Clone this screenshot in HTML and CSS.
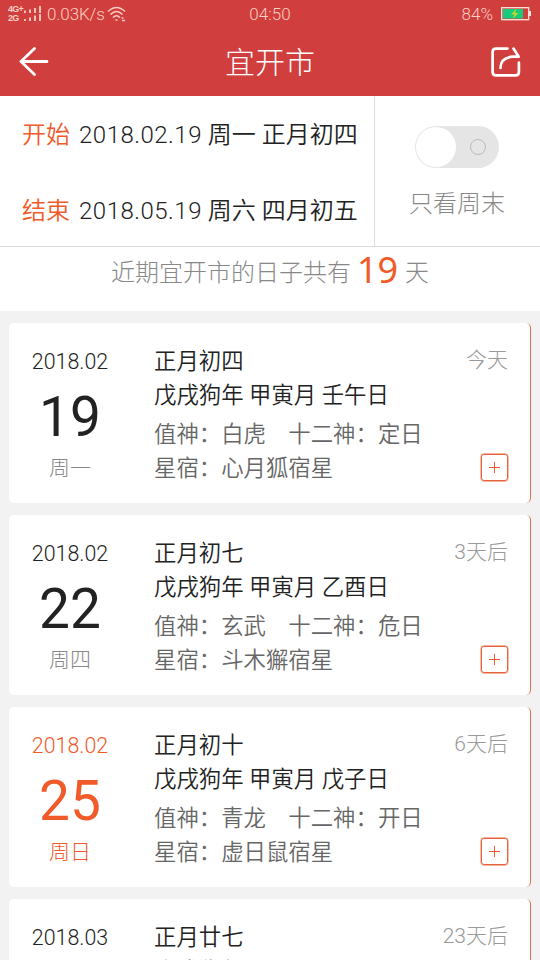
FILE: index.html
```html
<!DOCTYPE html>
<html lang="zh-CN">
<head>
<meta charset="utf-8">
<title>宜开市</title>
<link rel="stylesheet" href="styles.css">
</head>
<body>
<header class="top">
  <div class="status">
    <div class="status-left">
      <div class="nets"><span>4G+</span><span>2G</span></div>
      <svg class="signal" width="17" height="16" viewBox="0 0 17 16"><path d="M1 4.500v2.500M6 3.500v3.500M11 2v5M16 0v7M1 13v2M6 11.500v3.500M11 9.500v5.500M16 8v7" stroke="#fbcfc3" stroke-width="1.800"/></svg>
      <span class="speed">0.03K/s</span>
      <svg class="wifi" width="20" height="16" viewBox="0 0 20 16" fill="none" stroke="#fbcfc3" stroke-width="1.500"><path d="M1 5.500Q9.500-2.500 18 5.500M3.500 8.500Q9.500 2.500 15.500 8.500M6 11.500Q9.500 8 13 11.500"/><path d="M8.500 14h2M14.500 12h2M15 14.500h3"/></svg>
    </div>
    <span class="clock">04:50</span>
    <div class="status-right">
      <span>84%</span>
      <svg width="31" height="14" viewBox="0 0 31 14"><rect x=".7" y=".7" width="27" height="12" fill="none" stroke="#ffe4dc" stroke-width="1.300"/><rect x="2" y="2" width="20" height="9.500" fill="#16cc7c"/><path d="M28 4h2v5h-2z" fill="#ffe4dc"/><path d="M15.500 1.500L10 7.500h3.500L11.500 12l6-6h-3.500z" fill="#c6d62c"/></svg>
    </div>
  </div>
  <div class="nav">
    <svg width="30" height="30" viewBox="0 0 30 30" fill="none" stroke="#fff" stroke-width="2.800" stroke-linecap="round" stroke-linejoin="round"><path d="M15.500 1.500L2 14.500l13.500 13M2 14.500h26"/></svg>
    <h1>宜开市</h1>
    <svg width="30" height="30" viewBox="0 0 30 30" fill="none" stroke="#fff" stroke-width="2.700" stroke-linecap="round" stroke-linejoin="round"><path d="M16.500 1.600H5Q1.600 1.600 1.600 5v20q0 3.400 3.400 3.400h19.500q3.400 0 3.400-3.400v-9.500"/><path d="M22.500 1.600l5.200 8.100H22Q9.500 10.500 9.500 21"/></svg>
  </div>
</header>

<section class="filter">
  <div class="range">
    <div class="range-row"><span class="label">开始</span><span><span class="num">2018.02.19</span> 周一 正月初四</span></div>
    <div class="range-row"><span class="label">结束</span><span><span class="num">2018.05.19</span> 周六 四月初五</span></div>
  </div>
  <div class="weekend">
    <div class="switch"><i class="knob"></i><i class="ring"></i></div>
    <span>只看周末</span>
  </div>
</section>
<p class="summary"><span>近期宜开市的日子共有</span><b>19</b><span>天</span></p>

<main class="list">
  <article class="card">
    <div class="date"><span class="month">2018.02</span><span class="day">19</span><span class="week">周一</span></div>
    <div class="info"><p>正月初四</p><p>戊戌狗年 甲寅月 壬午日</p><p class="god">值神：白虎　十二神：定日</p><p class="star">星宿：心月狐宿星</p></div>
    <div class="side"><span>今天</span><i class="add"></i></div>
  </article>
  <article class="card">
    <div class="date"><span class="month">2018.02</span><span class="day">22</span><span class="week">周四</span></div>
    <div class="info"><p>正月初七</p><p>戊戌狗年 甲寅月 乙酉日</p><p class="god">值神：玄武　十二神：危日</p><p class="star">星宿：斗木獬宿星</p></div>
    <div class="side"><span>3天后</span><i class="add"></i></div>
  </article>
  <article class="card">
    <div class="date rest"><span class="month">2018.02</span><span class="day">25</span><span class="week">周日</span></div>
    <div class="info"><p>正月初十</p><p>戊戌狗年 甲寅月 戊子日</p><p class="god">值神：青龙　十二神：开日</p><p class="star">星宿：虚日鼠宿星</p></div>
    <div class="side"><span>6天后</span><i class="add"></i></div>
  </article>
  <article class="card">
    <div class="date"><span class="month">2018.03</span></div>
    <div class="info"><p>正月廿七</p><p>戊戌狗年 乙卯月 乙巳日</p></div>
    <div class="side"><span>23天后</span></div>
  </article>
</main>
</body>
</html>
```

FILE: styles.css
```css
* { box-sizing: border-box; margin: 0; padding: 0; }
html { height: 100%; overflow: hidden; }
body {
  display: flex;
  flex-direction: column;
  height: 960px;
  overflow: hidden;
  background: #f2f2f2;
  color: #222;
  font-family: Roboto, "Noto Sans CJK SC", sans-serif;
  font-weight: 350;
}
svg { display: block; flex: none; }

.top { flex: none; height: 96px; background: #d03e3d; }
.status {
  display: grid;
  grid-template-columns: 1fr auto 1fr;
  align-items: center;
  height: 28px;
  padding: 0 8px;
  color: #fbcfc3;
  font: 300 17px/28px Roboto, sans-serif;
}
.status-left, .status-right { display: flex; align-items: center; }
.status-right { justify-content: flex-end; gap: 8px; }
.nets { display: flex; flex-direction: column; width: 16px; font: 700 9px/9px "Liberation Sans", sans-serif; letter-spacing: -0.8px; }
.nets span { white-space: nowrap; }
.speed { margin-left: 6px; letter-spacing: -0.1px; }
.wifi { margin-left: 2px; }
.nav { display: flex; align-items: center; justify-content: space-between; height: 68px; padding: 0 19px; }
.nav h1 { padding-top: 2px; color: #fff; font-size: 30px; font-weight: 300; line-height: 40px; }

.filter { flex: none; display: flex; height: 151px; background: #fff; border-bottom: 1px solid #ddd; font-size: 24px; }
.range { width: 375px; padding: 1px 0 0 22px; border-right: 1px solid #ddd; }
.range-row { display: flex; gap: 9px; height: 76px; line-height: 76px; white-space: nowrap; }
.range-row + .range-row { height: 73px; }
.num { letter-spacing: 0.5px; }
.label { color: #f15a29; }
.weekend { flex: 1; display: flex; flex-direction: column; align-items: center; padding: 30px 1px 0 0; color: #888; font-weight: 300; line-height: 36px; }
.switch { display: flex; align-items: center; justify-content: space-between; width: 84px; height: 42px; margin-bottom: 18px; padding: 0 13px 0 1px; border-radius: 21px; background: #e5e5e5; }
.knob { width: 40px; height: 40px; border-radius: 50%; background: #fff; }
.ring { width: 16px; height: 16px; border: 1.5px solid #bbb; border-radius: 50%; }

.summary { flex: none; display: flex; justify-content: center; height: 64px; background: #fff; color: #888; font-size: 24px; font-weight: 300; line-height: 52px; }
.summary b { margin: 0 7px 0 6px; color: #f15a29; font: 400 36px/46px "Noto Sans", sans-serif; }

.list { flex: 1; min-height: 0; overflow: hidden; display: flex; flex-direction: column; gap: 12px; padding: 12px 9px 0; }
.card { flex: none; display: flex; height: 180px; padding-right: 22px; border-right: 1px solid #e07050; border-radius: 5px; background: #fff; }
.date { display: flex; flex-direction: column; align-items: center; width: 122px; padding-top: 24px; }
.month { font-size: 21.4px; line-height: 30px; }
.day { height: 64px; margin-top: 7px; font-size: 55px; font-weight: 400; line-height: 66px; }
.week { color: #888; font-size: 21px; font-weight: 300; line-height: 41px; }
.rest, .rest .week { color: #f15a29; }
.info { flex: 1; padding: 21px 0 0 23px; font-size: 22.4px; line-height: 34px; white-space: nowrap; }
.info .god { margin-top: 5px; }
.info .god, .info .star { color: #666; }
.side { display: flex; flex-direction: column; align-items: flex-end; justify-content: space-between; padding: 21px 0 22px; color: #999; font-size: 21px; font-weight: 300; line-height: 33px; white-space: nowrap; }
.add {
  width: 27px;
  height: 27px;
  border: 1.5px solid #e8633b;
  border-radius: 3px;
  background:
    linear-gradient(#f15a29, #f15a29) center / 11px 1px no-repeat,
    linear-gradient(#f15a29, #f15a29) center / 1px 11px no-repeat;
  box-shadow: 0 0 0 0.4px #e8633b;
}
```
